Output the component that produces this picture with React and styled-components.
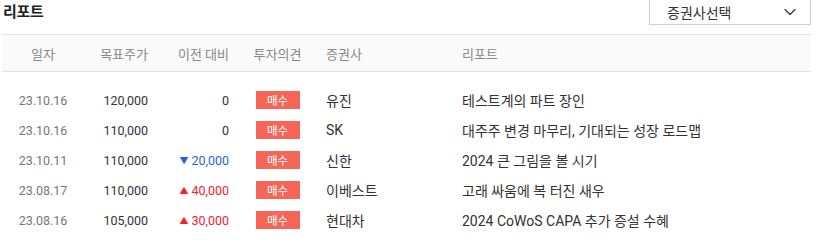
import React from 'react';
import styled, { createGlobalStyle } from 'styled-components';
import { ChevronDown } from 'lucide-react';

const GlobalStyle = createGlobalStyle`
  body {
    margin: 0;
    background: #fff;
    font-family: Roboto, "Noto Sans CJK KR", sans-serif;
    color: #333;
  }
`;

const reports = [
  { date: '23.10.16', target: '120,000', delta: 0, opinion: '매수', broker: '유진', title: '테스트계의 파트 장인' },
  { date: '23.10.16', target: '110,000', delta: 0, opinion: '매수', broker: 'SK', title: '대주주 변경 마무리, 기대되는 성장 로드맵' },
  { date: '23.10.11', target: '110,000', delta: -20000, opinion: '매수', broker: '신한', title: '2024 큰 그림을 볼 시기' },
  { date: '23.08.17', target: '110,000', delta: 40000, opinion: '매수', broker: '이베스트', title: '고래 싸움에 복 터진 새우' },
  { date: '23.08.16', target: '105,000', delta: 30000, opinion: '매수', broker: '현대차', title: '2024 CoWoS CAPA 추가 증설 수혜' },
];

const App = () => {
  return (
    <Wrapper>
      <GlobalStyle />
      <TopBar>
        <Title>리포트</Title>
        <Select>
          <span>증권사선택</span>
          <ChevronDown size={20} strokeWidth={1.4} />
        </Select>
      </TopBar>
      <Table>
        <HeadRow>
          <Cell align="center">일자</Cell>
          <Cell align="right">목표주가</Cell>
          <Cell align="right">이전 대비</Cell>
          <Cell align="center">투자의견</Cell>
          <Cell>증권사</Cell>
          <Cell>리포트</Cell>
        </HeadRow>
        <Body>
          {reports.map((r, i) => (
            <Row key={i}>
              <Cell align="center" tone="date" numeric>{r.date}</Cell>
              <Cell align="right" numeric>{r.target}</Cell>
              <Cell align="right" numeric>
                <Delta value={r.delta} />
              </Cell>
              <Cell align="center">
                <Badge>{r.opinion}</Badge>
              </Cell>
              <Cell>{r.broker}</Cell>
              <Cell>{r.title}</Cell>
            </Row>
          ))}
        </Body>
      </Table>
    </Wrapper>
  );
};

const Delta = ({ value }) => {
  if (value === 0) return <span>0</span>;
  const up = value > 0;
  return (
    <DeltaText up={up}>
      <Arrow up={up}>{up ? '▲' : '▼'}</Arrow>
      {Math.abs(value).toLocaleString('en-US')}
    </DeltaText>
  );
};

export default App;

const Wrapper = styled.div`
  width: 809px;
  padding: 0 12px 0 2px;
`;

const TopBar = styled.div`
  display: flex;
  justify-content: space-between;
  align-items: flex-start;
  height: 25px;
`;

const Title = styled.h2`
  margin: 2px 0 0 1px;
  font-size: 15px;
  font-weight: 700;
  color: #222;
  line-height: 20px;
  letter-spacing: -0.3px;
`;

const Select = styled.div`
  display: flex;
  align-items: center;
  justify-content: space-between;
  box-sizing: border-box;
  width: 162px;
  height: 27px;
  margin-top: -2px;
  padding: 0 10px 0 17px;
  border: 1px solid #cfcfcf;
  font-size: 14px;
  color: #333;
  svg {
    color: #333;
  }
`;

const Table = styled.div`
  margin-top: 9px;
`;

const columns = '82px 64px 81px 97px 136px 1fr';

const HeadRow = styled.div`
  display: grid;
  grid-template-columns: ${columns};
  align-items: center;
  height: 36px;
  background: #fafafa;
  border-top: 1px solid #e4e4e4;
  border-bottom: 1px solid #e4e4e4;
  font-size: 13px;
  color: #888;
`;

const Body = styled.div`
  padding-top: 13px;
`;

const Row = styled.div`
  display: grid;
  grid-template-columns: ${columns};
  align-items: center;
  height: 30px;
  font-size: 14px;
  color: #333;
`;

const Cell = styled.div`
  text-align: ${(p) => p.align || 'left'};
  white-space: nowrap;
  font-size: ${(p) => (p.numeric ? '12.5px' : 'inherit')};
  color: ${(p) => (p.tone === 'date' ? '#777' : 'inherit')};
`;

const DeltaText = styled.span`
  color: ${(p) => (p.up ? '#f5222d' : '#2e5fd6')};
`;

const Arrow = styled.span`
  display: inline-block;
  font-size: 9px;
  margin-right: 3px;
  vertical-align: 1px;
`;

const Badge = styled.span`
  display: inline-flex;
  align-items: center;
  justify-content: center;
  width: 44px;
  height: 18px;
  background: #f36658;
  color: #fff;
  font-size: 11.5px;
`;
